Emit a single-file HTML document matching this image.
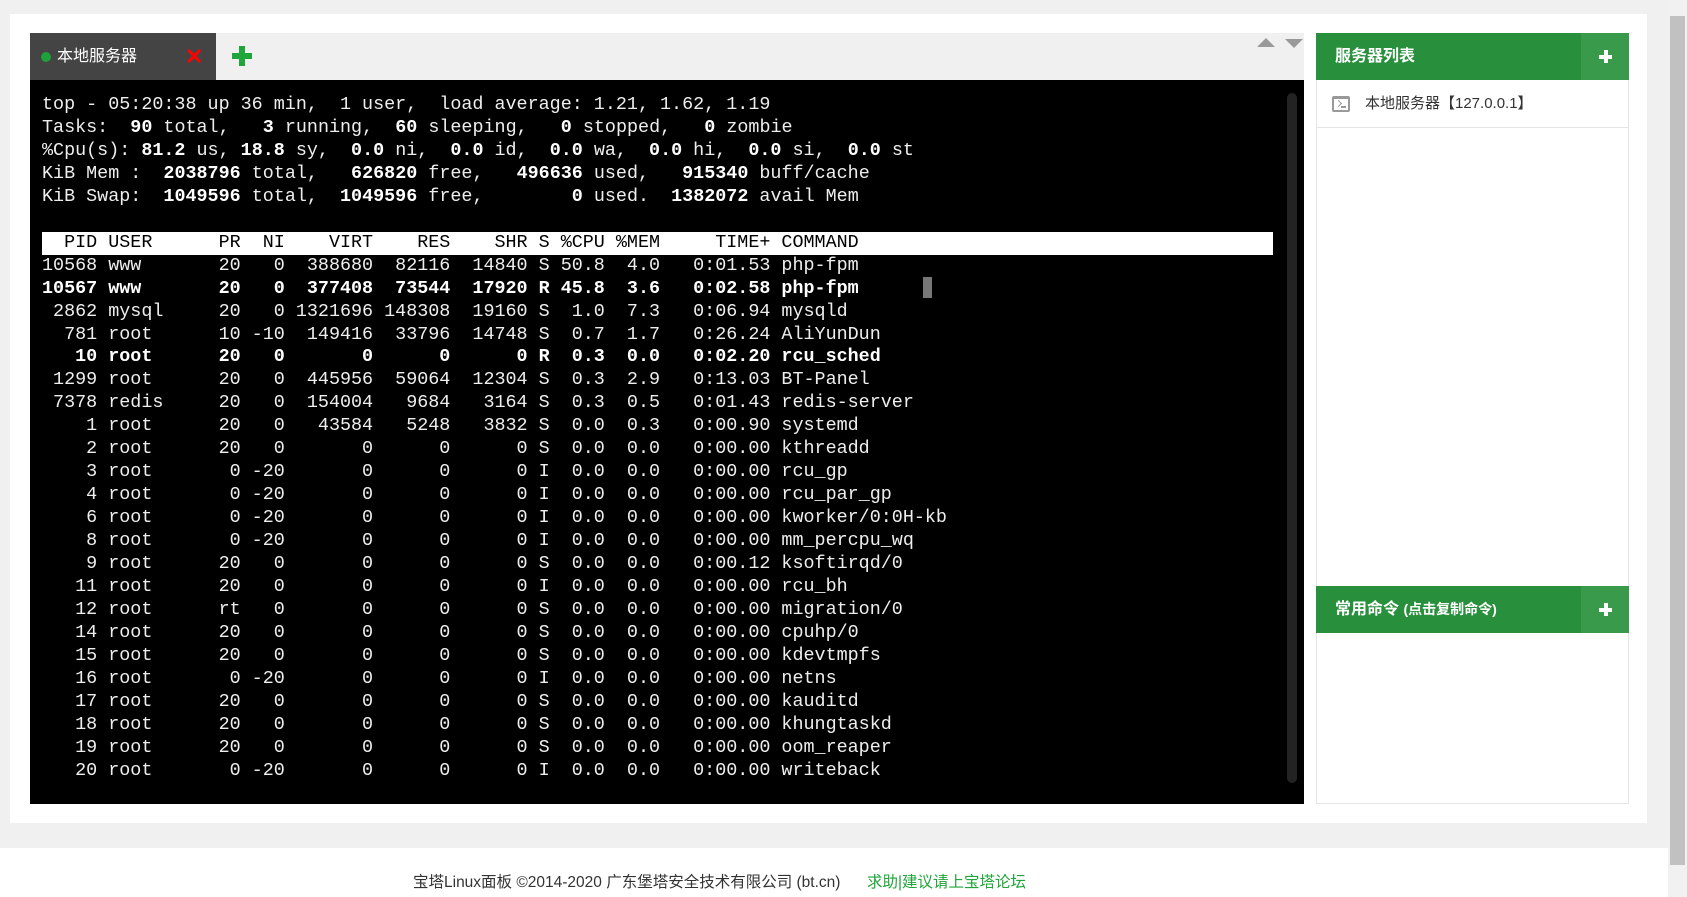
<!DOCTYPE html>
<html><head><meta charset="utf-8"><style>
*{margin:0;padding:0;box-sizing:border-box}
body{width:1687px;height:897px;background:#f0f0f0;position:relative;overflow:hidden;font-family:"Liberation Sans","Noto Sans CJK SC",sans-serif}
.card{position:absolute;left:10px;top:14px;width:1637px;height:809px;background:#fff}
.tabbar{position:absolute;left:30px;top:33px;width:1274px;height:47px;background:#f0f0f0}
.tab{position:absolute;left:0;top:0;width:186px;height:47px;background:#444;color:#fff;font-size:16px;line-height:47px}
.dot{position:absolute;left:11px;top:19px;width:10px;height:10px;border-radius:50%;background:#1ea03a}
.tab .t{position:absolute;left:27px}
.x{position:absolute;left:155px;top:0;color:#f00;font-size:22px;font-weight:bold}
.plus{position:absolute;left:202px;top:13px;width:20px;height:20px}
.plus:before{content:"";position:absolute;left:7px;top:0;width:6px;height:20px;background:#20a53a}
.plus:after{content:"";position:absolute;left:0;top:7px;width:20px;height:6px;background:#20a53a}
.arr{position:absolute;top:38px;width:0;height:0;border-left:9px solid transparent;border-right:9px solid transparent}
.term{position:absolute;left:30px;top:80px;width:1274px;height:724px;background:#000}
pre{position:absolute;left:12px;top:14px;font-family:"Liberation Mono",monospace;font-size:18.4px;line-height:22.95px;color:#eee}
pre b{color:#fff}
.hd{background:#fff;color:#000;display:inline-block;width:1231px}
.sb{position:absolute;left:1257px;top:13px;width:10px;height:690px;background:#232323;border-radius:5px}
.cur{position:absolute;left:893px;top:197px;width:9px;height:21px;background:#777}
.panel{position:absolute;left:1316px;width:313px;border:1px solid #e5e5e5;background:#fff}
.ph{height:47px;background:#28903c;color:#fff;font-weight:bold;font-size:16px;line-height:47px;padding-left:19px;position:relative;margin:-1px -1px 0 -1px}
.ph .pb{position:absolute;right:0;top:0;width:48px;height:47px;background:#3a9a4b}
.pb:before{content:"";position:absolute;left:18px;top:22px;width:13px;height:4px;background:#fff}
.pb:after{content:"";position:absolute;left:22.5px;top:17px;width:4px;height:13px;background:#fff}
.item{height:48px;border-bottom:1px solid #e5e5e5;position:relative;font-size:15px;color:#333;line-height:48px;padding-left:48px}
.ico{position:absolute;left:15px;top:16px;width:18px;height:16px;border:2px solid #999;border-top-width:3px;border-radius:2px}
.ico:before{content:"";position:absolute;left:2px;top:2px;width:4px;height:4px;border-right:1.5px solid #999;border-bottom:1.5px solid #999;transform:rotate(-45deg)}
.ico:after{content:"";position:absolute;left:7px;top:7px;width:5px;height:1.5px;background:#999}
.foot{position:absolute;left:0;top:848px;width:1668px;height:49px;background:#fff;font-size:15.5px;color:#333}
.vs{position:absolute;left:1668px;top:0;width:19px;height:897px;background:#f1f1f1}
.vt{position:absolute;left:2px;top:16px;width:15px;height:849px;background:#c1c1c1}
</style></head><body>
<div class="card"></div>
<div class="tabbar">
 <div class="tab"><span class="dot"></span><span class="t">本地服务器</span><span class="x">✕</span></div>
 <div class="plus"></div>
</div>
<div class="arr" style="left:1257px;border-bottom:9px solid #999"></div>
<div class="arr" style="left:1285px;top:39px;border-top:9px solid #999"></div>
<div class="term">
<pre>top - 05:20:38 up 36 min,  1 user,  load average: 1.21, 1.62, 1.19
Tasks:  <b>90</b> total,   <b>3</b> running,  <b>60</b> sleeping,   <b>0</b> stopped,   <b>0</b> zombie
%Cpu(s): <b>81.2</b> us, <b>18.8</b> sy,  <b>0.0</b> ni,  <b>0.0</b> id,  <b>0.0</b> wa,  <b>0.0</b> hi,  <b>0.0</b> si,  <b>0.0</b> st
KiB Mem :  <b>2038796</b> total,   <b>626820</b> free,   <b>496636</b> used,   <b>915340</b> buff/cache
KiB Swap:  <b>1049596</b> total,  <b>1049596</b> free,        <b>0</b> used.  <b>1382072</b> avail Mem

<span class="hd">  PID USER      PR  NI    VIRT    RES    SHR S %CPU %MEM     TIME+ COMMAND</span>
10568 www       20   0  388680  82116  14840 S 50.8  4.0   0:01.53 php-fpm
<b>10567 www       20   0  377408  73544  17920 R 45.8  3.6   0:02.58 php-fpm</b>
 2862 mysql     20   0 1321696 148308  19160 S  1.0  7.3   0:06.94 mysqld
  781 root      10 -10  149416  33796  14748 S  0.7  1.7   0:26.24 AliYunDun
<b>   10 root      20   0       0      0      0 R  0.3  0.0   0:02.20 rcu_sched</b>
 1299 root      20   0  445956  59064  12304 S  0.3  2.9   0:13.03 BT-Panel
 7378 redis     20   0  154004   9684   3164 S  0.3  0.5   0:01.43 redis-server
    1 root      20   0   43584   5248   3832 S  0.0  0.3   0:00.90 systemd
    2 root      20   0       0      0      0 S  0.0  0.0   0:00.00 kthreadd
    3 root       0 -20       0      0      0 I  0.0  0.0   0:00.00 rcu_gp
    4 root       0 -20       0      0      0 I  0.0  0.0   0:00.00 rcu_par_gp
    6 root       0 -20       0      0      0 I  0.0  0.0   0:00.00 kworker/0:0H-kb
    8 root       0 -20       0      0      0 I  0.0  0.0   0:00.00 mm_percpu_wq
    9 root      20   0       0      0      0 S  0.0  0.0   0:00.12 ksoftirqd/0
   11 root      20   0       0      0      0 I  0.0  0.0   0:00.00 rcu_bh
   12 root      rt   0       0      0      0 S  0.0  0.0   0:00.00 migration/0
   14 root      20   0       0      0      0 S  0.0  0.0   0:00.00 cpuhp/0
   15 root      20   0       0      0      0 S  0.0  0.0   0:00.00 kdevtmpfs
   16 root       0 -20       0      0      0 I  0.0  0.0   0:00.00 netns
   17 root      20   0       0      0      0 S  0.0  0.0   0:00.00 kauditd
   18 root      20   0       0      0      0 S  0.0  0.0   0:00.00 khungtaskd
   19 root      20   0       0      0      0 S  0.0  0.0   0:00.00 oom_reaper
   20 root       0 -20       0      0      0 I  0.0  0.0   0:00.00 writeback</pre>
<div class="cur"></div>
<div class="sb"></div>
</div>
<div class="panel" style="top:33px;height:130px;border-bottom:none">
 <div class="ph">服务器列表<span class="pb"></span></div>
 <div class="item"><span class="ico"></span>本地服务器【127.0.0.1】</div>
</div>
<div class="panel" style="top:163px;height:423px;border-top:none;border-bottom:none"></div>
<div class="panel" style="top:586px;height:218px">
 <div class="ph">常用命令 <span style="font-size:14px">(点击复制命令)</span><span class="pb"></span></div>
</div>
<div class="foot">
 <span style="position:absolute;left:413px;top:22px">宝塔Linux面板 ©2014-2020 广东堡塔安全技术有限公司 (bt.cn)</span>
 <span style="position:absolute;left:867px;top:22px;color:#20a53a">求助|建议请上宝塔论坛</span>
</div>
<div class="vs"><div class="vt"></div></div>
</body></html>
